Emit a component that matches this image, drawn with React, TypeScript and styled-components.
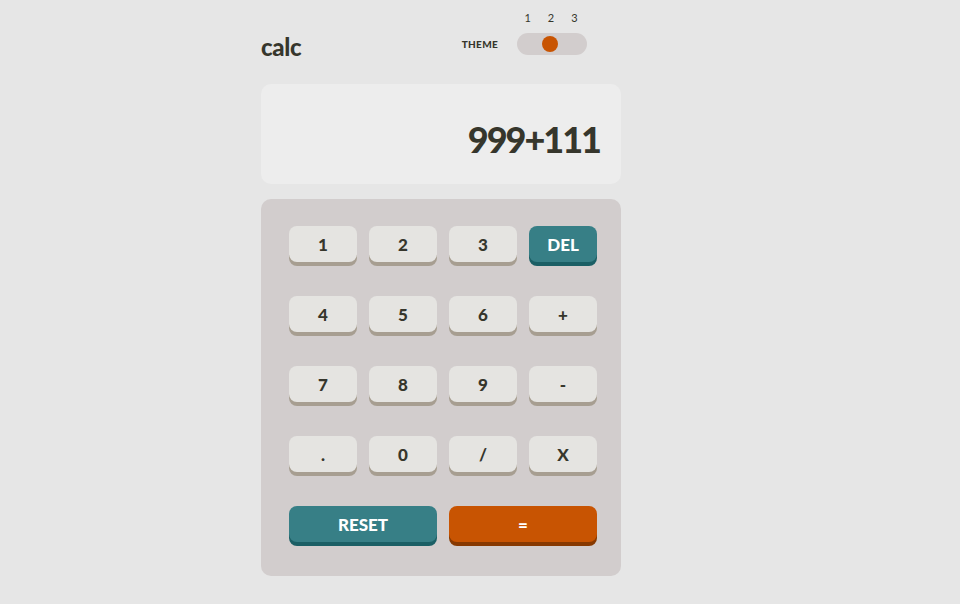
import React from "react";
import styled, { createGlobalStyle } from "styled-components";

const Global = createGlobalStyle`
  html, body { margin: 0; padding: 0; background: #e6e6e6; }
  body { font-family: "Lato", "Noto Sans", sans-serif; color: #36362c; }
`;

const Page = styled.div`
  padding: 12px 0 0 261px;
`;

const Calculator = styled.main`
  width: 360px;
`;

const Header = styled.header`
  display: flex;
  justify-content: space-between;
  align-items: flex-end;
`;

const Logo = styled.h1`
  margin: 0 0 -3px 0;
  font-size: 24px;
  font-weight: 900;
  line-height: 22px;
  letter-spacing: -0.3px;
`;

const ThemeGroup = styled.div`
  display: flex;
  align-items: flex-end;
  margin-right: 34px;
`;

const ThemeLabel = styled.span`
  font-size: 10px;
  font-weight: 900;
  letter-spacing: 0.3px;
  line-height: 22px;
  margin-right: 19px;
`;

const SwitchColumn = styled.div`
  display: flex;
  flex-direction: column;
  width: 70px;
`;

const Numbers = styled.div`
  display: flex;
  justify-content: center;
  gap: 17px;
  font-size: 11px;
  line-height: 12px;
  margin-bottom: 9px;
  padding-right: 2px;
`;

const Track = styled.div`
  height: 22px;
  border-radius: 11px;
  background: #d2cdcd;
  display: flex;
  align-items: center;
  justify-content: center;
  padding-right: 4px;
  box-sizing: border-box;
`;

const Knob = styled.div`
  width: 16px;
  height: 16px;
  border-radius: 50%;
  background: #c85402;
`;

const Screen = styled.section`
  margin-top: 29px;
  height: 100px;
  border-radius: 10px;
  background: #ededed;
  display: flex;
  align-items: center;
  justify-content: flex-end;
  padding: 10px 21px 0 0;
  box-sizing: border-box;
  font-size: 36px;
  font-weight: 900;
  letter-spacing: -2px;
`;

const Keypad = styled.section`
  margin-top: 15px;
  background: #d2cdcd;
  border-radius: 10px;
  padding: 27px 24px 34px 28px;
  display: grid;
  grid-template-columns: repeat(4, 68px);
  column-gap: 12px;
  row-gap: 34px;
`;

type Variant = "light" | "teal" | "orange";

const palette: Record<Variant, { bg: string; shadow: string; fg: string }> = {
  light: { bg: "#e5e4e1", shadow: "#a79e91", fg: "#36362c" },
  teal: { bg: "#377f86", shadow: "#1b5f65", fg: "#ffffff" },
  orange: { bg: "#c85402", shadow: "#873901", fg: "#ffffff" },
};

const Key = styled.button<{ $variant: Variant; $wide?: boolean }>`
  height: 36px;
  border: none;
  border-radius: 8px;
  padding: 0;
  font-family: "Lato", "Noto Sans", sans-serif;
  font-weight: 900;
  font-size: 17px;
  background: ${(p) => palette[p.$variant].bg};
  color: ${(p) => palette[p.$variant].fg};
  box-shadow: 0 4px 0 ${(p) => palette[p.$variant].shadow};
  grid-column: ${(p) => (p.$wide ? "span 2" : "span 1")};
  cursor: pointer;
`;

const keys: { label: string; variant: Variant; wide?: boolean }[] = [
  { label: "1", variant: "light" },
  { label: "2", variant: "light" },
  { label: "3", variant: "light" },
  { label: "DEL", variant: "teal" },
  { label: "4", variant: "light" },
  { label: "5", variant: "light" },
  { label: "6", variant: "light" },
  { label: "+", variant: "light" },
  { label: "7", variant: "light" },
  { label: "8", variant: "light" },
  { label: "9", variant: "light" },
  { label: "-", variant: "light" },
  { label: ".", variant: "light" },
  { label: "0", variant: "light" },
  { label: "/", variant: "light" },
  { label: "X", variant: "light" },
  { label: "RESET", variant: "teal", wide: true },
  { label: "=", variant: "orange", wide: true },
];

export default function App() {
  return (
    <>
      <Global />
      <Page>
        <Calculator>
          <Header>
            <Logo>calc</Logo>
            <ThemeGroup>
              <ThemeLabel>THEME</ThemeLabel>
              <SwitchColumn>
                <Numbers>
                  <span>1</span>
                  <span>2</span>
                  <span>3</span>
                </Numbers>
                <Track>
                  <Knob />
                </Track>
              </SwitchColumn>
            </ThemeGroup>
          </Header>
          <Screen>999+111</Screen>
          <Keypad>
            {keys.map((k) => (
              <Key key={k.label} $variant={k.variant} $wide={k.wide}>
                {k.label}
              </Key>
            ))}
          </Keypad>
        </Calculator>
      </Page>
    </>
  );
}
